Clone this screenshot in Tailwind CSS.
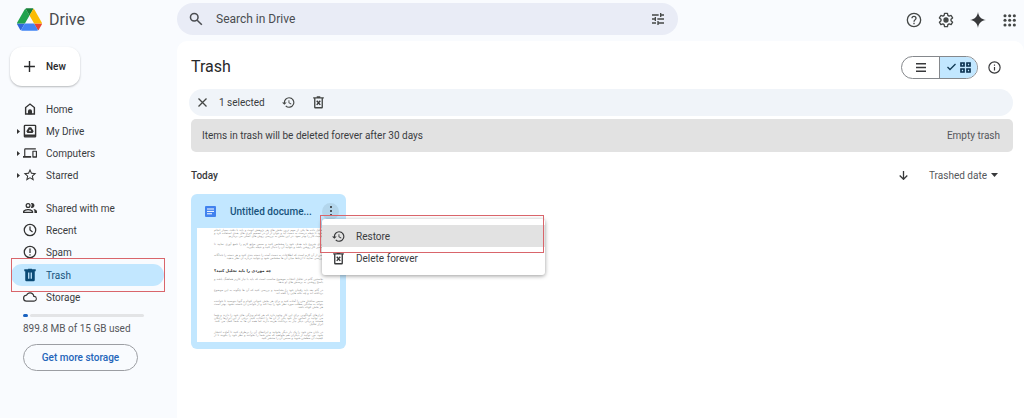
<!DOCTYPE html>
<html lang="en">
<head>
  <meta charset="UTF-8">
  <meta name="viewport" content="width=device-width, initial-scale=1.0">
  <title>Trash - Drive</title>
  <script src="https://cdn.jsdelivr.net/npm/@tailwindcss/browser@4"></script>
</head>
<body class="min-h-screen flex flex-col bg-[#f9fbfe] text-[#3a3c3f] text-[10px] font-['Roboto',sans-serif]">

  <!-- Shared icons -->
  <svg class="hidden">
    <symbol id="i-history" viewBox="1 1 22 22"><path d="M13 3a9 9 0 0 0-9 9H1l4 4 4-4H6a7 7 0 1 1 2.100 5l-1.500 1.400A9 9 0 1 0 13 3zm-1 5v5l4.200 2.500.8-1.300-3.500-2V8z"/></symbol>
    <symbol id="i-delforever" viewBox="1 1 22 22"><path fill-rule="evenodd" d="M15 3V1.500H9V3H3v2.300h1.500V20a2 2 0 0 0 2 2h11a2 2 0 0 0 2-2V5.300H21V3zM6.800 5.300h10.400v14.400H6.800z"/><path d="m9 9 6 7M15 9l-6 7" fill="none" stroke="#38393b" stroke-width="2.400"/></symbol>
  </svg>

  <!-- Top bar -->
  <header class="h-[41px] flex items-center">
    <a href="#" class="w-[177px] shrink-0 flex items-center gap-[7px] pl-[17px] text-[16px] leading-[20px] text-[#4a4c50]">
      <svg class="w-[25px] h-[23px] mt-[-2px]" viewBox="0 0 87.3 78">
        <path d="m6.600 66.850 3.850 6.650c.8 1.400 1.950 2.500 3.300 3.300l13.750-23.800h-27.500c0 1.550.4 3.100 1.200 4.500z" fill="#2f68d8"/>
        <path d="m43.650 25-13.750-23.800c-1.350.8-2.500 1.900-3.300 3.300l-25.400 44a9.060 9.060 0 0 0 -1.200 4.500h27.500z" fill="#22a34e"/>
        <path d="m73.550 76.800c1.350-.8 2.500-1.900 3.300-3.300l1.600-2.750 7.650-13.250c.8-1.400 1.200-2.950 1.200-4.500h-27.502l5.852 11.500z" fill="#ea4335"/>
        <path d="m43.650 25 13.750-23.800c-1.350-.8-2.900-1.200-4.500-1.200h-18.500c-1.600 0-3.150.45-4.500 1.200z" fill="#188038"/>
        <path d="m59.800 53h-32.300l-13.750 23.800c1.350.8 2.900 1.200 4.500 1.200h50.800c1.600 0 3.150-.45 4.500-1.200z" fill="#4285f4"/>
        <path d="m73.400 26.500-12.700-22c-.8-1.400-1.950-2.500-3.300-3.300l-13.750 23.800 16.150 28h27.450c0-1.550-.4-3.100-1.200-4.500z" fill="#fbbc04"/>
      </svg>
      <span class="mt-[-2px]">Drive</span>
    </a>
    <div class="w-[501px] h-[32px] mt-[-3px] flex items-center gap-[13px] pl-[12px] pr-[12px] rounded-full bg-[#e9ecf6]">
      <label for="search">
        <svg class="size-[14px]" role="img" aria-label="Search in Drive" viewBox="0 0 24 24" fill="none" stroke="#4a4c50" stroke-width="2.600"><circle cx="9" cy="9" r="6.500"/><path d="m14 14 8 8"/></svg>
      </label>
      <input id="search" type="text" placeholder="Search in Drive" class="grow min-w-0 text-[12px] outline-none placeholder:text-[#4a4c50]">
      <button aria-label="Search options">
        <svg class="size-[16px]" viewBox="0 0 24 24" fill="#444746"><path d="M3 17v2h6v-2zM3 5v2h10V5zm10 16v-2h8v-2h-8v-2h-2v6zM7 9v2H3v2h4v2h2V9zm14 4v-2H11v2zm-6-4h2V7h4V5h-4V3h-2z"/></svg>
      </button>
    </div>
    <div class="ml-auto flex items-center gap-[16px] pr-[6px] mt-[-2px]">
      <button aria-label="Help">
        <svg class="size-[16px]" viewBox="0 0 24 24" fill="#444746"><path d="M12 1a11 11 0 1 0 0 22 11 11 0 0 0 0-22zm0 20a9 9 0 1 1 0-18 9 9 0 0 1 0 18zm-1-4.800h2v2h-2zM12 5.500a4 4 0 0 0-4 4h2a2 2 0 1 1 4 0c0 2-3 1.900-3 5.200h2c0-2.200 3-2.600 3-5.200a4 4 0 0 0-4-4z"/></svg>
      </button>
      <button aria-label="Settings">
        <svg class="size-[16px]" viewBox="0 0 24 24" fill="none" stroke="#444746" stroke-width="2"><path stroke-linejoin="round" d="M9.800 2h4.400l.6 3.100 1.900 1.100 3-1 2.200 3.700-2.400 2.100v2.100l2.400 2.100-2.200 3.700-3-1-1.900 1.100-.6 3H9.800l-.6-3-1.900-1.100-3 1-2.200-3.700 2.400-2.100v-2.100L2.100 8.900l2.200-3.700 3 1 1.900-1.100z"/><circle cx="12" cy="12" r="3" fill="#444746"/></svg>
      </button>
      <button aria-label="Gemini">
        <svg class="size-[16px]" viewBox="0 0 24 24" fill="#38393b"><path d="M12 0c1 7 5 11 12 12-7 1-11 5-12 12-1-7-5-11-12-12C7 11 11 7 12 0z"/></svg>
      </button>
      <button aria-label="Google apps">
        <svg class="size-[16px]" viewBox="0 0 24 24" fill="#444746"><circle cx="4.500" cy="5.500" r="2.300"/><circle cx="11.500" cy="5.500" r="2.300"/><circle cx="18.500" cy="5.500" r="2.300"/><circle cx="4.500" cy="12.500" r="2.300"/><circle cx="11.500" cy="12.500" r="2.300"/><circle cx="18.500" cy="12.500" r="2.300"/><circle cx="4.500" cy="19.500" r="2.300"/><circle cx="11.500" cy="19.500" r="2.300"/><circle cx="18.500" cy="19.500" r="2.300"/></svg>
      </button>
    </div>
  </header>

  <div class="grow flex">
    <!-- Sidebar -->
    <aside class="w-[177px] shrink-0 pt-[6px]">
      <button class="ml-[10px] w-[70px] h-[39px] flex items-center gap-[10px] pl-[13px] rounded-[12px] bg-white shadow-[0_1px_2px_rgba(60,64,67,0.35)] font-medium text-[#28292b]">
        <svg class="size-[13px]" viewBox="0 0 12 12" stroke="#28292b" stroke-width="1.300"><path d="M6 1v10M1 6h10"/></svg>
        New
      </button>

      <nav class="mt-[12px] ml-[11px] mr-[13px] flex flex-col">
        <a href="#" class="h-[22px] flex items-center pl-[12px] gap-[9px]">
          <svg class="size-[14px]" viewBox="0 0 24 24"><path d="M4.500 20.500V9.500L12 3.500l7.500 6v11z" fill="none" stroke="#333" stroke-width="2.400"/><path d="M8.500 21v-5a3.500 3.500 0 0 1 7 0v5z" fill="#333"/></svg>
          Home
        </a>
        <a href="#" class="h-[22px] flex items-center pl-[6px] gap-[9px]">
          <span class="flex items-center gap-[3px]">
            <svg class="w-[3px] h-[5px]" viewBox="0 0 3 5" fill="#333"><path d="M0 0l3 2.500L0 5z"/></svg>
            <svg class="size-[14px]" viewBox="1 1 22 22"><rect x="3.200" y="3.200" width="17.600" height="18" rx="1" fill="none" stroke="#333" stroke-width="2.200"/><path d="M3 17.500h18v3.500H3z" fill="#333"/><path d="M10.200 6h3.600l4 6.500-1.800 2.500H8l-1.800-2.500zm1.800 3.300-2 3.200h4z" fill="#333" fill-rule="evenodd"/></svg>
          </span>
          My Drive
        </a>
        <a href="#" class="h-[22px] flex items-center pl-[6px] gap-[9px]">
          <span class="flex items-center gap-[3px]">
            <svg class="w-[3px] h-[5px]" viewBox="0 0 3 5" fill="#333"><path d="M0 0l3 2.500L0 5z"/></svg>
            <svg class="size-[14px]" viewBox="0 0 24 24" fill="#333"><path d="M4 6h18V4H4a2 2 0 0 0-2 2v11H0v3h14v-3H4zm19 2h-6a1 1 0 0 0-1 1v10a1 1 0 0 0 1 1h6a1 1 0 0 0 1-1V9a1 1 0 0 0-1-1zm-1 9.500h-4V10h4z"/></svg>
          </span>
          Computers
        </a>
        <a href="#" class="h-[22px] flex items-center pl-[6px] gap-[9px]">
          <span class="flex items-center gap-[3px]">
            <svg class="w-[3px] h-[5px]" viewBox="0 0 3 5" fill="#333"><path d="M0 0l3 2.500L0 5z"/></svg>
            <svg class="size-[14px]" viewBox="1 1 22 22" fill="#333"><path d="m22 9.240-7.190-.62L12 2 9.190 8.630 2 9.240l5.460 4.730L5.820 21 12 17.270 18.180 21l-1.630-7.030zM12 15.400l-3.760 2.270 1-4.280-3.320-2.880 4.380-.38L12 6.100l1.710 4.040 4.380.38-3.320 2.880 1 4.280z"/></svg>
          </span>
          Starred
        </a>
        <a href="#" class="h-[22px] mt-[11px] flex items-center pl-[12px] gap-[9px]">
          <svg class="size-[14px]" viewBox="1 1 22 22" fill="#333"><path fill-rule="evenodd" d="M9 12a4 4 0 1 0 0-8 4 4 0 0 0 0 8zm0-6a2 2 0 1 1 0 4 2 2 0 0 1 0-4zM9 13.500c-2.700 0-8 1.300-8 4V20h16v-2.500c0-2.700-5.300-4-8-4zM3 18c.2-.9 3.300-2.300 6-2.300s5.800 1.400 6 2.300zM15 12a4 4 0 1 0-1.500-7.700 6 6 0 0 1 0 7.400c.5.200 1 .3 1.500.3zM17.200 13.700c1.100.9 1.800 2.200 1.800 3.800V20h4v-2.500c0-2-3-3.300-5.800-3.800z"/></svg>
          Shared with me
        </a>
        <a href="#" class="h-[22px] flex items-center pl-[12px] gap-[9px]">
          <svg class="size-[14px]" viewBox="1 1 22 22" fill="none" stroke="#333" stroke-width="2"><circle cx="12" cy="12" r="9"/><path d="M12 6.500V12l4 3"/></svg>
          Recent
        </a>
        <a href="#" class="h-[22px] flex items-center pl-[12px] gap-[9px]">
          <svg class="size-[14px]" viewBox="1 1 22 22" fill="none" stroke="#333" stroke-width="2"><circle cx="12" cy="12" r="9"/><path d="M12 6.500v7M12 15.500v2"/></svg>
          Spam
        </a>
        <a href="#" class="relative h-[22px] mt-[1px] flex items-center pl-[12px] gap-[9px] rounded-full bg-[#c2e7ff] text-[#17537c]">
          <svg class="size-[14px]" viewBox="1 1 22 22" fill="#0b4a75"><path fill-rule="evenodd" d="M15 3V2H9v1H3v3h1.500v14a2 2 0 0 0 2 2h11a2 2 0 0 0 2-2V6H21V3zM9 8h2v10H9zm4 0h2v10h-2z"/></svg>
          Trash
          <span class="absolute -top-[6px] -bottom-[6px] left-0 -right-px border border-[#d9656b]"></span>
        </a>
        <a href="#" class="h-[22px] flex items-center pl-[12px] gap-[9px]">
          <svg class="size-[14px]" viewBox="0 0 24 24" fill="#333"><path d="M19.350 10.040A7.490 7.490 0 0 0 12 4C9.110 4 6.600 5.640 5.350 8.040A5.994 5.994 0 0 0 0 14a6 6 0 0 0 6 6h13a5 5 0 0 0 .35-9.960zM19 18H6a4 4 0 0 1-.44-7.970l1.070-.11.5-.95A5.470 5.470 0 0 1 12 6c2.620 0 4.880 1.860 5.390 4.430l.3 1.500 1.530.11A2.980 2.980 0 0 1 19 18z"/></svg>
          Storage
        </a>
      </nav>

      <div class="mt-[6px] ml-[23px] mr-[33px]">
        <div class="h-[3px] flex gap-[2px]">
          <div class="w-[5px] rounded-full bg-[#1a62c0]"></div>
          <div class="grow rounded-full bg-[#e3e4e6]"></div>
        </div>
        <p class="mt-[4px] leading-[16px] text-[#55575b] whitespace-nowrap">899.8 MB of 15 GB used</p>
        <button class="mt-[7px] w-[115px] h-[27px] rounded-full border border-[#9c9ea3] font-medium text-[#2465ba] whitespace-nowrap">Get more storage</button>
      </div>
    </aside>

    <!-- Trash -->
    <main class="grow min-w-0 rounded-t-[10px] bg-white pl-[12px] pr-[11px] pt-[13px]">
      <div class="flex items-center h-[26px] pl-[2px]">
        <h1 class="text-[16px] leading-[20px] text-[#28292b]">Trash</h1>
        <div class="ml-auto flex h-[23px] w-[77px] rounded-full border border-[#85888c] overflow-hidden">
          <button aria-label="List layout" class="flex-1 flex items-center justify-center">
            <svg class="w-[10px] h-[9px]" viewBox="0 0 10 9" fill="#38393b"><path d="M0 0h10v1.500H0zM0 3.700h10v1.500H0zM0 7.400h10v1.500H0z"/></svg>
          </button>
          <button aria-label="Grid layout" class="flex-1 flex items-center justify-center gap-[4px] border-l border-[#85888c] bg-[#c2e7ff]">
            <svg class="w-[9px] h-[8px]" viewBox="0 0 9 8" fill="none" stroke="#123a55" stroke-width="1.300"><path d="m.5 4 2.500 2.500L8.500 1"/></svg>
            <svg class="size-[11px]" viewBox="0 0 11 11" fill="none" stroke="#0b3150" stroke-width="1.700"><path d="M1 1h3v3H1zM7 1h3v3H7zM1 7h3v3H1zM7 7h3v3H7z"/></svg>
          </button>
        </div>
        <button aria-label="View details" class="ml-[10px] mr-[12px]">
          <svg class="size-[13px]" viewBox="1 1 22 22" fill="none" stroke="#38393b" stroke-width="2"><circle cx="12" cy="12" r="9.500"/><path d="M12 11v6M12 7v2.200"/></svg>
        </button>
      </div>

      <div class="mt-[9px] h-[27px] flex items-center rounded-full bg-[#f0f4f9] pl-[9px]">
        <button aria-label="Clear selection">
          <svg class="size-[9px]" viewBox="0 0 9 9" stroke="#444746" stroke-width="1.300"><path d="m.5.5 8 8M8.500.5l-8 8"/></svg>
        </button>
        <span class="ml-[12px] w-[63px]">1 selected</span>
        <button aria-label="Restore from trash"><svg class="size-[13px]" fill="#444746"><use href="#i-history"/></svg></button>
        <button aria-label="Delete forever" class="ml-[17px]"><svg class="size-[13px]" fill="#444746"><use href="#i-delforever"/></svg></button>
      </div>

      <div class="mt-[3px] ml-[2px] h-[33px] flex items-center justify-between rounded-[5px] bg-[#e2e2e2] pl-[11px] pr-[13px]">
        <p>Items in trash will be deleted forever after 30 days</p>
        <button class="text-[#55575b]">Empty trash</button>
      </div>

      <div class="mt-[11px] pl-[2px] h-[24px] flex items-center">
        <h2 class="font-medium text-[#38393b]">Today</h2>
        <button aria-label="Reverse sort direction" class="ml-auto">
          <svg class="size-[9px]" viewBox="0 0 9 9" fill="none" stroke="#38393b" stroke-width="1.300"><path d="M4.500 0v8M.7 4.500l3.800 3.800 3.800-3.800"/></svg>
        </button>
        <button class="ml-[21px] mr-[15px] flex items-center gap-[4px] text-[#55575b]">
          Trashed date
          <svg class="w-[7px] h-[4px]" viewBox="0 0 7 4" fill="#38393b"><path d="M0 0h7L3.500 4z"/></svg>
        </button>
      </div>

      <div class="relative mt-[7px] ml-[2px] w-[155px] rounded-[6px] bg-[#c2e7ff] px-[6px] pb-[7px]">
        <div class="h-[34px] flex items-center pl-[8px]">
          <svg class="size-[11px] shrink-0" viewBox="0 0 11 11"><rect width="11" height="11" rx="1" fill="#4182ee"/><path d="M2 3h7M2 5.400h7M2 7.800h5" stroke="#fff"/></svg>
          <h3 class="ml-[14px] w-[86px] font-medium text-[#17537c] whitespace-nowrap">Untitled docume...</h3>
          <button aria-label="More actions" class="ml-[6px] size-[17px] shrink-0 flex items-center justify-center rounded-full bg-[#b3d6ec]">
            <svg class="w-[2px] h-[10px]" viewBox="0 0 2 10" fill="#28292b"><circle cx="1" cy="1" r="1"/><circle cx="1" cy="5" r="1"/><circle cx="1" cy="9" r="1"/></svg>
          </button>
        </div>

        <!-- Page preview -->
        <div lang="fa" dir="rtl" class="h-[114px] overflow-hidden bg-white px-[17px] pt-px flex flex-col gap-[5px] text-[3px] leading-[3px] text-justify text-[#8c8c8c] font-['DejaVu_Sans',sans-serif]">
          <p>تحلیل داده ها یکی از مهم ترین بخش های هر پژوهش است و باید با دقت بسیار انجام شود تا نتیجه درست به دست آید و بتوان از آن در تصمیم گیری های بعدی استفاده کرد و کیفیت کار را بهتر نمود. در این بخش به بررسی روش های اصلی می پردازیم.</p>
          <p>برای شروع باید هدف خود را مشخص کنید و سپس منابع لازم را جمع آوری نمایید تا مسیر کار روشن باشد و بتوانید آن را دنبال کنید و نتیجه بگیرید.</p>
          <p>پس از آن لازم است که اطلاعات به دست آمده را دسته بندی کنید و هر دسته را جداگانه بررسی نمایید تا ارتباط میان آن ها مشخص شود و بتوانید درباره آن نظر بدهید.</p>
          <h4 class="mt-[3px] text-left text-[4px] leading-[5px] font-bold text-[#333]">چه موردی را باید تحلیل کنید؟</h4>
          <p>نخستین گام در تحلیل انتخاب موضوع مناسب است که باید با نیاز کاربر هماهنگ باشد و پاسخ روشنی به پرسش های او بدهد.</p>
          <p>در گام بعد باید رقیبان خود را بشناسید و بررسی کنید که آن ها چگونه به این موضوع پرداخته اند و چه نکته هایی را گفته اند.</p>
          <p>سپس ساختار متن را آماده کنید و برای هر بخش عنوانی کوتاه و گویا بنویسید تا خواننده بتواند به سادگی مطلب مورد نظر خود را پیدا کند و از خواندن آن خسته نشود. بهتر است هر بخش کوتاه باشد.</p>
          <p>ابزارهای گوناگونی برای این کار وجود دارد که هر کدام ویژگی های خود را دارند و شما می توانید بر اساس نیاز خود یکی از آن ها را انتخاب کنید. برخی از این ابزارها رایگان هستند و برخی دیگر نیاز به پرداخت هزینه دارند اما همه آن ها به شما کمک می کنند. ابزار تحلیل</p>
          <p>در پایان متن خود را یک بار دیگر بخوانید و ایرادهای آن را برطرف کنید تا آماده انتشار شود. می توانید از دیگران هم بخواهید که متن شما را بخوانند و نظر خود را بگویند تا از کیفیت آن مطمئن شوید و سپس آن را منتشر کنید.</p>
        </div>

        <!-- Context menu -->
        <div class="absolute left-[131px] top-[25px] w-[223px] py-[6px] rounded-[3px] bg-white shadow-[0_1px_4px_rgba(0,0,0,0.4)]">
          <button class="w-full h-[22px] flex items-center gap-[11px] pl-[10px] bg-[#e2e2e2]">
            <svg class="size-[13px]" fill="#38393b"><use href="#i-history"/></svg>
            Restore
          </button>
          <button class="w-full h-[22px] flex items-center gap-[11px] pl-[10px]">
            <svg class="size-[13px]" fill="#38393b"><use href="#i-delforever"/></svg>
            Delete forever
          </button>
          <span class="absolute -left-[2px] right-px -top-[4px] h-[38px] border border-[#d9656b]"></span>
        </div>
      </div>
    </main>
  </div>
</body>
</html>
